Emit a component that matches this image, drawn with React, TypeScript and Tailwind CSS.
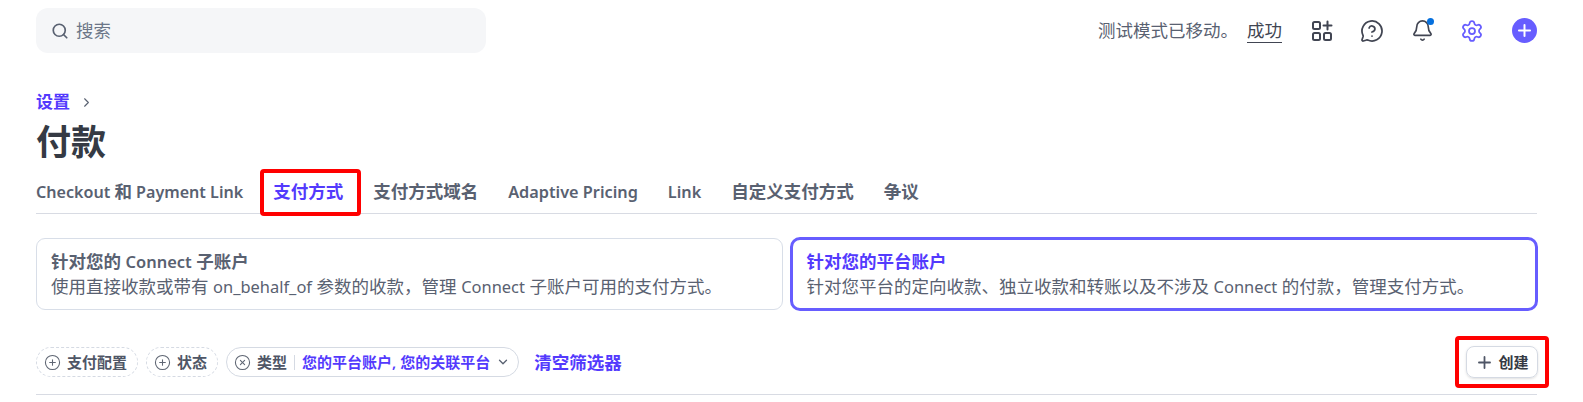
import type { ReactNode } from "react";
import { Bell, ChevronDown, ChevronRight, CirclePlus, CircleX, MessageCircleQuestion, Plus, Search, Settings } from "lucide-react";

// latin runs sit a bit smaller than the CJK text around them
function L({ children }: { children: ReactNode }) {
  return <span className="text-[0.94em]">{children}</span>;
}

const tabs: { key: string; label: ReactNode }[] = [
  { key: "checkout", label: <span className="text-[0.92em]">Checkout <span className="text-[1.087em]">和</span> Payment Link</span> },
  { key: "methods", label: "支付方式" },
  { key: "domains", label: "支付方式域名" },
  { key: "adaptive", label: <span className="text-[0.93em]">Adaptive Pricing</span> },
  { key: "link", label: <span className="text-[0.93em]">Link</span> },
  { key: "custom", label: "自定义支付方式" },
  { key: "disputes", label: "争议" },
];

function AppsIcon() {
  return (
    <svg width="22" height="22" viewBox="0 0 22 22" fill="none" stroke="currentColor" strokeWidth="2" strokeLinecap="round">
      <rect x="2" y="2" width="7" height="7" rx="1.5" />
      <rect x="2" y="13" width="7" height="7" rx="1.5" />
      <rect x="13" y="13" width="7" height="7" rx="1.5" />
      <path d="M16.5 1.5v8M12.5 5.5h8" />
    </svg>
  );
}

function FilterPill({ label }: { label: string }) {
  return (
    <div className="flex h-[30px] items-center gap-[6px] rounded-full border border-dashed border-[#d5dae3] pr-[10px] pl-[7px]">
      <CirclePlus size={17} strokeWidth={1.5} className="text-[#5f6673]" />
      <span className="text-[15px] font-semibold text-[#4f5666]">{label}</span>
    </div>
  );
}

function ScopeCard({ title, body, active }: { title: ReactNode; body: ReactNode; active?: boolean }) {
  return (
    <div className={active ? "-m-px h-[74px] rounded-[10px] border-[3px] border-[#675dff] px-[14px] pt-[9px]" : "h-[72px] rounded-[9px] border border-[#d8dee8] px-[14px] pt-[10px]"}>
      <div className={active ? "text-[17.5px] leading-[25px] font-semibold text-[#533afd]" : "text-[17.5px] leading-[25px] font-semibold text-[#596171]"}>{title}</div>
      <div className="text-[17.5px] leading-[25px] text-[#596171]">{body}</div>
    </div>
  );
}

export default function App() {
  return (
    <div className="h-[402px] overflow-hidden bg-white pr-[46px] pl-9 font-['Noto_Sans','Noto_Sans_CJK_SC',sans-serif]">
      <header className="mt-2 flex h-[45px] items-center justify-between">
        <div className="flex h-[45px] w-[450px] items-center gap-[7px] rounded-xl bg-[#f5f6f8] px-[15px]">
          <Search size={18} strokeWidth={2.25} className="text-[#596171]" />
          <span className="text-[17.5px] text-[#6c7688]">搜索</span>
        </div>
        <div className="flex items-center text-[#414552]">
          <span className="text-[17.5px] text-[#596171]">测试模式已移动。</span>
          <span className="mr-[28px] ml-[9px] border-b border-[#414552] text-[17.5px] leading-[24px]">成功</span>
          <div className="flex items-center gap-[26px]">
            <div className="flex w-6 justify-center"><AppsIcon /></div>
            <MessageCircleQuestion size={24} strokeWidth={1.75} />
            <div className="relative flex w-6 justify-center">
              <Bell size={23} strokeWidth={1.75} />
              <span className="absolute -top-[1px] right-0 h-[7px] w-[7px] rounded-full bg-[#0570de]" />
            </div>
            <Settings size={24} strokeWidth={1.75} className="text-[#675dff]" />
            <div className="ml-[2px] flex h-[25px] w-[25px] items-center justify-center rounded-full bg-[#675dff] text-white">
              <Plus size={19} strokeWidth={2.5} />
            </div>
          </div>
        </div>
      </header>

      <nav className="mt-[36px] flex h-[26px] items-center gap-[9px] text-[17px] font-semibold text-[#533afd]">
        设置
        <ChevronRight size={15} strokeWidth={1.75} className="text-[#596171]" />
      </nav>
      <h1 className="mt-[3px] h-[48px] text-[35px] leading-[48px] font-bold text-[#353a44]">付款</h1>

      <div className="mt-[4px] flex h-[44px] items-center gap-[30px] border-b border-[#d8dbe3] text-[17.5px] font-semibold text-[#596171]">
        {tabs.map((tab) =>
          tab.key === "methods" ? (
            <div key={tab.key} className="relative text-[#533afd]">
              {tab.label}
              <span className="absolute -top-[9px] -right-[18px] -bottom-[11px] -left-[13px] rounded-sm border-4 border-[#ff0000]" />
            </div>
          ) : (
            <div key={tab.key}>{tab.label}</div>
          ),
        )}
      </div>

      <div className="mt-[24px] grid grid-cols-2 gap-2">
        <ScopeCard
          title={<>针对您的 <L>Connect</L> 子账户</>}
          body={<>使用直接收款或带有 <L>on_behalf_of</L> 参数的收款，管理 <L>Connect</L> 子账户可用的支付方式。</>}
        />
        <ScopeCard
          active
          title="针对您的平台账户"
          body={<>针对您平台的定向收款、独立收款和转账以及不涉及 <L>Connect</L> 的付款，管理支付方式。</>}
        />
      </div>

      <div className="mt-[36px] flex items-center justify-between border-b border-[#d8dbe3] pb-[16px]">
        <div className="flex items-center gap-[8px]">
          <FilterPill label="支付配置" />
          <FilterPill label="状态" />
          <div className="flex h-[30px] items-center rounded-full border border-[#d5dae3] pr-2 pl-[7px]">
            <CircleX size={17} strokeWidth={1.5} className="text-[#5f6673]" />
            <span className="ml-[6px] text-[15px] font-semibold text-[#4f5666]">类型</span>
            <span className="mx-[7px] h-[15px] w-px bg-[#d5dae3]" />
            <span className="text-[15px] font-semibold text-[#533afd]">您的平台账户, 您的关联平台</span>
            <ChevronDown size={14} strokeWidth={2.25} className="ml-[6px] text-[#596171]" />
          </div>
          <button className="ml-[7px] text-[17.5px] font-semibold text-[#533afd]">清空筛选器</button>
        </div>
        <div className="relative -mr-px">
          <button className="flex h-[32px] w-[72px] items-center justify-center gap-[4px] rounded-lg border border-[#d5dae3] text-[15px] font-semibold text-[#353a44] shadow-sm">
            <Plus size={19} strokeWidth={2.25} className="text-[#4f5666]" />
            创建
          </button>
          <span className="absolute -top-[10px] -right-[11px] -bottom-[10px] -left-[11px] rounded-sm border-4 border-[#ff0000]" />
        </div>
      </div>
    </div>
  );
}
